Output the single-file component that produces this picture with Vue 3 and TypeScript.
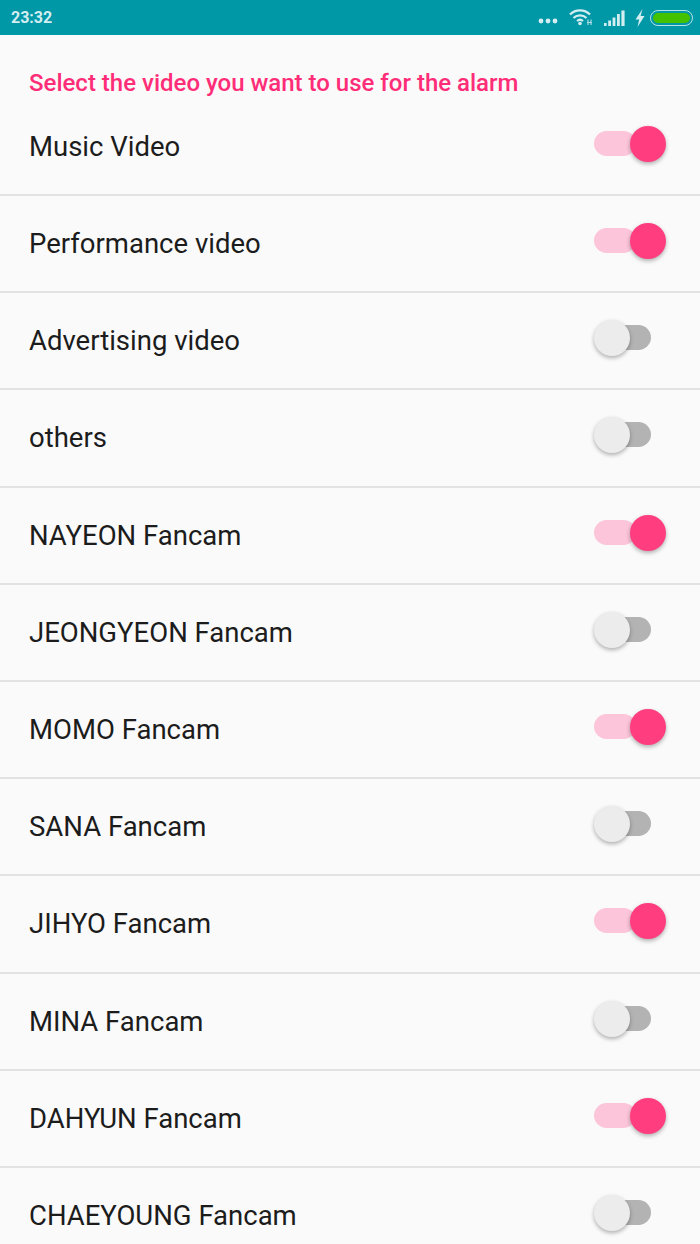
<script setup lang="ts">
interface VideoOption {
  label: string
  on: boolean
}

const options: VideoOption[] = [
  { label: 'Music Video', on: true },
  { label: 'Performance video', on: true },
  { label: 'Advertising video', on: false },
  { label: 'others', on: false },
  { label: 'NAYEON Fancam', on: true },
  { label: 'JEONGYEON Fancam', on: false },
  { label: 'MOMO Fancam', on: true },
  { label: 'SANA Fancam', on: false },
  { label: 'JIHYO Fancam', on: true },
  { label: 'MINA Fancam', on: false },
  { label: 'DAHYUN Fancam', on: true },
  { label: 'CHAEYOUNG Fancam', on: false },
]
</script>

<template>
  <div class="screen">
    <div class="status-bar">
      <span class="time">23:32</span>
      <div class="status-icons">
        <svg class="dots" width="20" height="6" viewBox="0 0 20 6">
          <circle cx="3" cy="3" r="2.4" />
          <circle cx="10" cy="3" r="2.4" />
          <circle cx="17" cy="3" r="2.4" />
        </svg>
        <svg class="wifi" width="24" height="18" viewBox="0 0 24 18">
          <path d="M1 6.5C6.5 1 15.5 1 21 6.5" />
          <path d="M4.5 10C8 6.5 14 6.5 17.5 10" />
          <path d="M8 13C9.800 11.500 12.200 11.500 14 13" />
          <circle class="fill" cx="11" cy="15.500" r="1.800" />
          <path class="thin" d="M19 11.500V17M22 11.500V17M18 14.500H23" />
        </svg>
        <svg class="signal" width="22" height="16" viewBox="0 0 22 16">
          <rect x="0" y="13" width="2.600" height="3" />
          <rect x="4.200" y="10.500" width="2.800" height="5.500" />
          <rect x="8.600" y="7.500" width="2.800" height="8.500" />
          <rect x="13" y="4" width="2.800" height="12" />
          <rect x="17.400" y="0.500" width="3.200" height="15.500" />
        </svg>
        <svg class="bolt" width="10" height="18" viewBox="0 0 10 18">
          <path d="M7.500 0L0.500 10.500H4.200L2.500 18L9.500 7H5.600Z" />
        </svg>
        <div class="battery"><div class="battery-level"></div></div>
      </div>
    </div>

    <h1 class="title">Select the video you want to use for the alarm</h1>

    <ul class="list">
      <li v-for="option in options" :key="option.label" class="row">
        <span class="label">{{ option.label }}</span>
        <span class="switch" :class="{ on: option.on }">
          <span class="track"></span>
          <span class="thumb"></span>
        </span>
      </li>
    </ul>
  </div>
</template>

<style scoped>
.screen {
  width: 700px;
  height: 1244px;
  overflow: hidden;
  background-color: #fafafa;
  font-family: Roboto, "Liberation Sans", sans-serif;
}

.status-bar {
  height: 35px;
  padding: 0 7px 0 11px;
  box-sizing: border-box;
  display: flex;
  align-items: center;
  justify-content: space-between;
  background-color: #0097a7;
  color: #d3eef1;
}

.time {
  font-size: 16px;
  font-weight: 700;
  margin-top: -1px;
}

.status-icons {
  display: flex;
  align-items: center;
}

.dots {
  fill: #d3eef1;
  margin: 7px 11px 0 0;
}

.wifi {
  margin: -2px 11px 0 0;
}

.wifi path {
  fill: none;
  stroke: #d3eef1;
  stroke-width: 2.200;
}

.wifi .fill {
  fill: #d3eef1;
}

.wifi .thin {
  stroke-width: 1.200;
  stroke: #a9dde3;
}

.signal {
  fill: #d3eef1;
  margin: 0 9px 0 0;
}

.bolt {
  fill: #d3eef1;
  margin: 0 5px 0 0;
}

.battery {
  width: 43px;
  height: 16px;
  box-sizing: border-box;
  padding: 2px;
  border: 1.500px solid #b5e3e8;
  border-radius: 8px;
}

.battery-level {
  height: 100%;
  border-radius: 5px;
  background-color: #44c200;
}

.title {
  margin: 0;
  padding: 34px 29px 0;
  height: 66px;
  box-sizing: border-box;
  font-size: 24px;
  line-height: 28px;
  font-weight: 500;
  color: #ff2d78;
}

.list {
  margin: 0;
  padding: 0;
  list-style: none;
}

.row {
  height: 97.200px;
  box-sizing: border-box;
  padding: 0 34px 0 29px;
  display: flex;
  align-items: center;
  justify-content: space-between;
  border-bottom: 2px solid #e2e2e2;
}

.row:first-child {
  height: 95px;
  padding-bottom: 3px;
}

.label {
  font-size: 27.500px;
  color: #1c1c1c;
}

.switch {
  position: relative;
  width: 72px;
  height: 36px;
  flex-shrink: 0;
  margin-top: -5px;
}

.track {
  position: absolute;
  top: 5px;
  left: 15px;
  width: 42px;
  height: 25px;
  border-radius: 13px;
  background-color: #b3b3b3;
}

.thumb {
  position: absolute;
  top: 0;
  left: 0;
  width: 36px;
  height: 36px;
  border-radius: 50%;
  background-color: #ececec;
  box-shadow: 0 2px 4px rgba(0, 0, 0, 0.3);
}

.switch.on .track {
  left: 0;
  background-color: #fcc5d9;
}

.switch.on .thumb {
  left: 36px;
  background-color: #ff3d7f;
}
</style>
